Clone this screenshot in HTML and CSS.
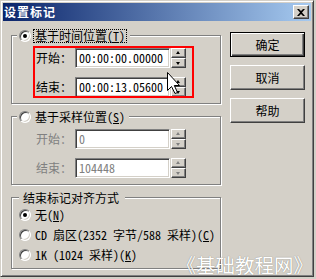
FILE: index.html
```html
<!DOCTYPE html>
<html lang="zh-CN">
<head>
    <meta charset="UTF-8">
    <title>设置标记</title>
    <link rel="stylesheet" href="styles.css">
</head>
<body>
    <div class="window">
        <div class="titlebar">
            <span class="title">设置标记</span>
            <span class="close">
                <svg width="8" height="7" viewBox="0 0 8 7"><path d="M0 0h2l2 2 2-2h2L5 3.5 8 7H6L4 5 2 7H0l3-3.5z" fill="#000"/></svg>
            </span>
        </div>

        <div class="client">
            <div class="left">
                <!-- time based -->
                <div class="group">
                    <div class="group-title">
                        <span class="radio checked"></span>
                        <span class="focus">基于时间位置(<u>T</u>)</span>
                    </div>
                    <div class="row first">
                        <span class="lbl">开始：</span>
                        <span class="edit">00:00:00.00000</span>
                        <span class="spin"><span class="up"></span><span class="down"></span></span>
                    </div>
                    <div class="row">
                        <span class="lbl">结束：</span>
                        <span class="edit">00:00:13.05600</span>
                        <span class="spin"><span class="up"></span><span class="down"></span></span>
                    </div>
                </div>

                <!-- sample based -->
                <div class="group disabled">
                    <div class="group-title">
                        <span class="radio"></span>
                        <span class="plain">基于采样位置(<u>S</u>)</span>
                    </div>
                    <div class="row first">
                        <span class="lbl">开始：</span>
                        <span class="edit">0</span>
                        <span class="spin"><span class="up"></span><span class="down"></span></span>
                    </div>
                    <div class="row">
                        <span class="lbl">结束：</span>
                        <span class="edit">104448</span>
                        <span class="spin"><span class="up"></span><span class="down"></span></span>
                    </div>
                </div>

                <!-- alignment -->
                <div class="group align">
                    <div class="group-title text-only">结束标记对齐方式</div>
                    <div class="opt"><span class="radio checked"></span><span>无(<u>N</u>)</span></div>
                    <div class="opt"><span class="radio"></span><span>CD 扇区(2352 字节/588 采样)(<u>C</u>)</span></div>
                    <div class="opt"><span class="radio"></span><span>1K (1024 采样)(<u>K</u>)</span></div>
                </div>
            </div>

            <div class="buttons">
                <div class="btn default">确定</div>
                <div class="btn">取消</div>
                <div class="btn">帮助</div>
            </div>
        </div>

        <div class="marker"></div>
        <svg class="cursor" width="14" height="23" viewBox="0 0 14 23">
            <path d="M0.5 0.5V18.5L4.5 14.5L8 21.5L10.5 20.5L7.3 13.5H12.5Z" fill="#fff" stroke="#000" stroke-width="1"/>
        </svg>
        <div class="watermark">《基础教程网》</div>
    </div>
</body>
</html>
```

FILE: styles.css
```css
* {
    margin: 0;
    padding: 0;
    box-sizing: border-box;
}

body {
    background: #d4d0c8;
    font-family: "Noto Sans Mono CJK SC", "Noto Sans CJK SC", sans-serif;
    font-size: 12px;
    line-height: 1;
    color: #000;
}

.window {
    position: relative;
    width: 314px;
    height: 277px;
    background: #d4d0c8;
    border: 1px solid;
    border-color: #d4d0c8 #404040 #404040 #d4d0c8;
    box-shadow: inset 1px 1px 0 #fff, inset -1px -1px 0 #808080;
    padding: 2px;
}

.titlebar {
    height: 18px;
    display: flex;
    align-items: center;
    justify-content: space-between;
    padding: 0 2px 0 1px;
    background: linear-gradient(to right, #0a246a, #a6caf0);
}

.title {
    color: #fff;
    font-family: "Noto Sans CJK SC", sans-serif;
    font-weight: bold;
    letter-spacing: 1px;
}

.close {
    width: 16px;
    height: 14px;
    display: flex;
    align-items: center;
    justify-content: center;
    background: #d4d0c8;
    border: 1px solid;
    border-color: #fff #404040 #404040 #fff;
    box-shadow: inset -1px -1px 0 #808080;
}

.client {
    display: flex;
    align-items: flex-start;
    padding-left: 8px;
}

.left {
    width: 210px;
    padding-top: 14px;
}

/* group boxes */
.group {
    border: 1px solid #808080;
    box-shadow: inset 1px 1px 0 #fff, 1px 1px 0 #fff;
    padding: 0 0 6px 7px;
}

.group + .group {
    margin-top: 12px;
}

.group-title {
    display: flex;
    align-items: center;
    gap: 4px;
    width: fit-content;
    height: 14px;
    margin: -7px 0 0 -2px;
    padding: 0 4px 0 2px;
    background: #d4d0c8;
}

.group-title.text-only {
    height: 13px;
    margin-left: 0;
    padding: 0 6px 0 4px;
}

.focus {
    outline: 1px dotted #000;
    outline-offset: 0;
    padding: 0 1px;
    margin-left: -1px;
}

u {
    text-decoration: underline;
    text-underline-offset: 1px;
}

/* edit rows */
.row {
    display: flex;
    align-items: center;
    height: 20px;
    margin-top: 9px;
}

.row.first {
    margin-top: 5px;
}

.lbl {
    width: 39px;
    margin-left: 17px;
}

.edit {
    width: 95px;
    height: 20px;
    display: flex;
    align-items: center;
    padding-left: 3px;
    background: #fff;
    border: 1px solid;
    border-color: #808080 #fff #fff #808080;
    box-shadow: inset 1px 1px 0 #404040, inset -1px -1px 0 #d4d0c8;
}

.spin {
    width: 15px;
    height: 20px;
    margin-left: 1px;
    display: flex;
    flex-direction: column;
}

.spin span {
    flex: 1;
    position: relative;
    background: #d4d0c8;
    border: 1px solid;
    border-color: #fff #404040 #404040 #fff;
    box-shadow: inset -1px -1px 0 #808080;
}

.spin span::before {
    content: "";
    position: absolute;
    left: 4px;
    top: 2px;
    border-left: 2.5px solid transparent;
    border-right: 2.5px solid transparent;
}

.spin .up::before {
    border-bottom: 3px solid #000;
}

.spin .down::before {
    top: 3px;
    border-top: 3px solid #000;
}

.disabled .lbl,
.disabled .edit {
    color: #808080;
}

.disabled .spin .up::before {
    border-bottom-color: #808080;
}

.disabled .spin .down::before {
    border-top-color: #808080;
}

/* radios */
.radio {
    width: 12px;
    height: 12px;
    flex: none;
    position: relative;
    border-radius: 50%;
    background: #fff;
    border: 1px solid;
    border-color: #808080 #fff #fff #808080;
    box-shadow: inset 1px 1px 0 #404040, inset -1px -1px 0 #d4d0c8;
}

.radio.checked::after {
    content: "";
    position: absolute;
    left: 3px;
    top: 3px;
    width: 4px;
    height: 4px;
    border-radius: 50%;
    background: #000;
}

.align {
    padding-bottom: 5px;
}

.opt {
    display: flex;
    align-items: center;
    gap: 4px;
    height: 16px;
    margin-top: 4px;
    white-space: nowrap;
}

.group-title + .opt {
    margin-top: 3px;
}

/* buttons */
.buttons {
    margin-left: 9px;
    padding-top: 11px;
    display: flex;
    flex-direction: column;
    gap: 8px;
}

.btn {
    width: 75px;
    height: 25px;
    display: flex;
    align-items: center;
    justify-content: center;
    border: 1px solid;
    border-color: #fff #404040 #404040 #fff;
    box-shadow: inset -1px -1px 0 #808080;
}

.btn.default {
    border-color: #000;
    box-shadow: inset 1px 1px 0 #fff, inset -1px -1px 0 #404040, inset -2px -2px 0 #808080;
}

/* overlays */
.marker {
    position: absolute;
    left: 32px;
    top: 45px;
    width: 161px;
    height: 52px;
    border: 2px solid #f00;
}

.cursor {
    position: absolute;
    left: 166px;
    top: 71px;
}

.watermark {
    position: absolute;
    right: 0;
    bottom: 2px;
    font-family: "Noto Sans CJK SC", sans-serif;
    font-size: 19.5px;
    color: #fff;
    text-shadow: 0 0 1px rgba(0, 0, 0, 0.45);
    white-space: nowrap;
}
```
